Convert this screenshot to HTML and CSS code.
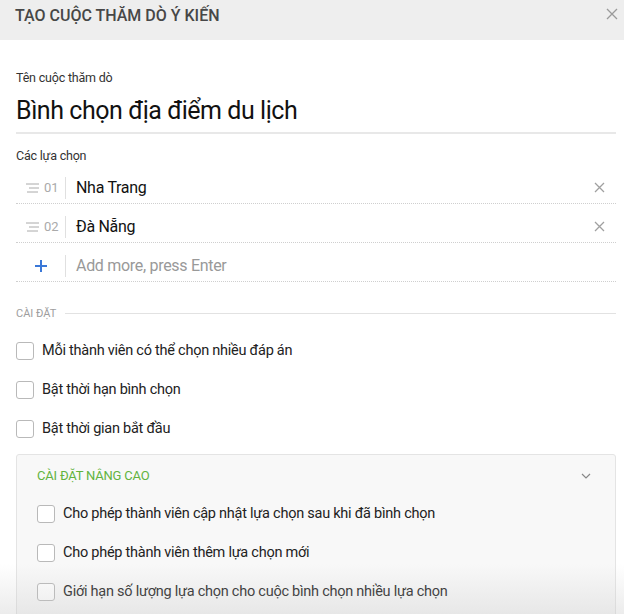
FILE: index.html
```html
<!DOCTYPE html>
<html lang="vi">
<head>
<meta charset="utf-8">
<title>Tạo cuộc thăm dò ý kiến</title>
<link rel="stylesheet" href="styles.css">
</head>
<body>
<div class="modal">
  <header class="modal-header">
    <h1 class="modal-title">TẠO CUỘC THĂM DÒ Ý KIẾN</h1>
    <span class="close-btn" aria-label="close">
      <svg width="12" height="12" viewBox="0 0 12 12"><path d="M1 1L11 11M11 1L1 11" stroke="#9a9a9a" stroke-width="1.3" fill="none"/></svg>
    </span>
  </header>
  <div class="modal-body">
    <div class="field-label">Tên cuộc thăm dò</div>
    <div class="poll-title">Bình chọn địa điểm du lịch</div>

    <div class="field-label options-label">Các lựa chọn</div>
    <div class="options">
      <div class="option-row">
        <div class="option-handle">
          <svg class="drag" width="13" height="10" viewBox="0 0 13 10"><path d="M0 1H13M3 5H13M1 9H12" stroke="#aaa" stroke-width="1" fill="none"/></svg>
          <span class="num">01</span>
        </div>
        <div class="option-text">Nha Trang</div>
        <svg class="remove" width="11" height="11" viewBox="0 0 11 11"><path d="M1 1L10 10M10 1L1 10" stroke="#a0a0a0" stroke-width="1.3" fill="none"/></svg>
      </div>
      <div class="option-row">
        <div class="option-handle">
          <svg class="drag" width="13" height="10" viewBox="0 0 13 10"><path d="M0 1H13M3 5H13M1 9H12" stroke="#aaa" stroke-width="1" fill="none"/></svg>
          <span class="num">02</span>
        </div>
        <div class="option-text">Đà Nẵng</div>
        <svg class="remove" width="11" height="11" viewBox="0 0 11 11"><path d="M1 1L10 10M10 1L1 10" stroke="#a0a0a0" stroke-width="1.3" fill="none"/></svg>
      </div>
      <div class="option-row">
        <div class="option-handle add">
          <svg width="12" height="12" viewBox="0 0 12 12"><path d="M6 0V12M0 6H12" stroke="#3a78d8" stroke-width="2" fill="none"/></svg>
        </div>
        <div class="option-text placeholder">Add more, press Enter</div>
      </div>
    </div>

    <div class="section-title"><span>CÀI ĐẶT</span></div>
    <div class="checks">
      <label class="check"><span class="box"></span>Mỗi thành viên có thể chọn nhiều đáp án</label>
      <label class="check"><span class="box"></span>Bật thời hạn bình chọn</label>
      <label class="check"><span class="box"></span>Bật thời gian bắt đầu</label>
    </div>

    <div class="advanced">
      <div class="advanced-head">
        <span class="advanced-title">CÀI ĐẶT NÂNG CAO</span>
        <svg width="10" height="6" viewBox="0 0 10 6"><path d="M1 1L5 5L9 1" stroke="#888" stroke-width="1.2" fill="none"/></svg>
      </div>
      <div class="checks">
        <label class="check"><span class="box"></span>Cho phép thành viên cập nhật lựa chọn sau khi đã bình chọn</label>
        <label class="check"><span class="box"></span>Cho phép thành viên thêm lựa chọn mới</label>
        <label class="check"><span class="box"></span>Giới hạn số lượng lựa chọn cho cuộc bình chọn nhiều lựa chọn</label>
      </div>
    </div>
  </div>
  <div class="bottom-fade"></div>
</div>
</body>
</html>
```

FILE: styles.css
```css
* { box-sizing: border-box; }
html, body {
  margin: 0;
  padding: 0;
  background: #fff;
  font-family: Roboto, "Noto Sans", sans-serif;
  color: #222;
}
.modal {
  position: relative;
  width: 624px;
  height: 614px;
  overflow: hidden;
}
.modal-header {
  height: 40px;
  background: #eeeeee;
  display: flex;
  align-items: center;
  justify-content: space-between;
  padding: 0 6px 0 15px;
}
.modal-title {
  margin: 0;
  font-size: 16px;
  font-weight: 500;
  color: #474747;
  position: relative;
  top: -5px;
}
.close-btn {
  display: flex;
  position: relative;
  top: -6px;
}
.modal-body {
  padding: 30px 8px 0 16px;
}
.field-label {
  font-size: 12.5px;
  color: #333;
  line-height: 16px;
  letter-spacing: -0.2px;
}
.poll-title {
  font-size: 25px;
  color: #111;
  line-height: 32px;
  margin-top: 9px;
  padding-bottom: 5px;
  border-bottom: 2px solid #e8e8e8;
  letter-spacing: -0.45px;
}
.options-label {
  margin-top: 14px;
}
.options {
  margin-top: 1px;
}
.option-row {
  display: flex;
  align-items: center;
  height: 39px;
  padding-top: 7px;
  border-bottom: 1px dotted #cfcfcf;
}
.option-handle {
  width: 50px;
  height: 22px;
  display: flex;
  align-items: center;
  gap: 5px;
  padding-left: 10px;
  border-right: 1px solid #e0e0e0;
  color: #aaa;
  font-size: 13px;
}
.option-handle.add {
  padding-left: 19px;
}
.option-text {
  flex: 1;
  padding-left: 10px;
  font-size: 16px;
  color: #111;
  letter-spacing: -0.3px;
}
.option-text.placeholder {
  color: #999;
}
.remove {
  margin-right: 11px;
}
.section-title {
  display: flex;
  align-items: center;
  gap: 9px;
  margin-top: 25px;
  font-size: 11px;
  color: #9e9e9e;
}
.section-title::after {
  content: "";
  flex: 1;
  height: 1px;
  background: #e2e2e2;
}
.checks {
  display: flex;
  flex-direction: column;
  gap: 19px;
  margin-top: 21px;
}
.check {
  display: flex;
  align-items: center;
  gap: 8px;
  font-size: 14.5px;
  color: #222;
  line-height: 20px;
  letter-spacing: -0.25px;
}
.box {
  width: 18px;
  height: 18px;
  border: 1px solid #b9b9b9;
  border-radius: 3px;
  background: #fff;
  flex-shrink: 0;
}
.advanced {
  margin-top: 15px;
  background: #f8f8f8;
  border: 1px solid #e4e4e4;
  border-radius: 3px;
  padding: 12px 20px 20px 20px;
}
.advanced-head {
  display: flex;
  align-items: center;
  justify-content: space-between;
  padding-right: 4px;
}
.advanced-title {
  font-size: 13px;
  color: #62b33e;
  line-height: 18px;
  letter-spacing: -0.2px;
}
.advanced .checks {
  margin-top: 19px;
}
.bottom-fade {
  position: absolute;
  left: 0;
  right: 0;
  bottom: 0;
  height: 50px;
  background: linear-gradient(to bottom, rgba(200,200,200,0), rgba(200,200,200,0.35));
  pointer-events: none;
}
```
